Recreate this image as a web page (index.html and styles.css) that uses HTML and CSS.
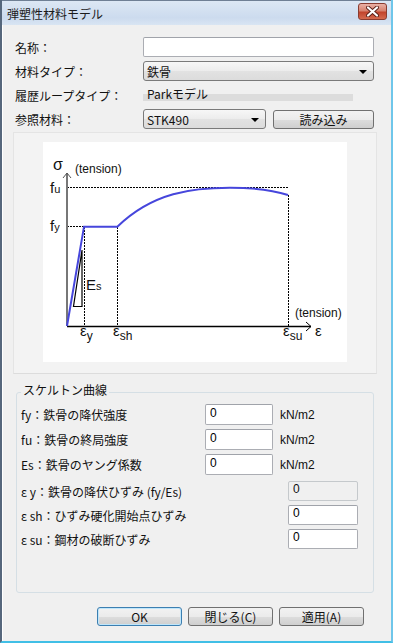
FILE: index.html
```html
<!DOCTYPE html>
<html lang="ja">
<head>
    <meta charset="UTF-8">
    <meta name="viewport" content="width=device-width, initial-scale=1.0">
    <title>弾塑性材料モデル</title>
    <link rel="stylesheet" href="styles.css">
</head>
<body>
<div class="window">
    <div class="titlebar">
        <span class="title">弾塑性材料モデル</span>
        <span class="close">
            <svg width="13" height="11" viewBox="0 0 13 11">
                <path d="M2 1.5 L11 9.5 M11 1.5 L2 9.5" stroke="#5a2018" stroke-width="4" stroke-linecap="round"/>
                <path d="M2 1.5 L11 9.5 M11 1.5 L2 9.5" stroke="#fff" stroke-width="2.2" stroke-linecap="round"/>
            </svg>
        </span>
    </div>

    <div class="body">
        <div class="form">
            <div class="row">
                <label>名称：</label>
                <input type="text" class="text wide">
            </div>
            <div class="row">
                <label>材料タイプ：</label>
                <div class="combo wide"><span>鉄骨</span><span class="arrow"></span></div>
            </div>
            <div class="row">
                <label>履歴ループタイプ：</label>
                <div class="static">Parkモデル</div>
            </div>
            <div class="row">
                <label>参照材料：</label>
                <div class="combo short"><span>STK490</span><span class="arrow"></span></div>
                <button class="btn load">読み込み</button>
            </div>
        </div>

        <div class="panel">
            <div class="chart">
                <svg width="304" height="220" viewBox="0 0 304 220">
                    <g stroke="#000" stroke-width="1" stroke-dasharray="2 1" fill="none">
                        <line x1="24" y1="45.5" x2="245" y2="45.5"/>
                        <line x1="24" y1="84.5" x2="41" y2="84.5"/>
                        <line x1="41.5" y1="85" x2="41.5" y2="184"/>
                        <line x1="74.5" y1="85" x2="74.5" y2="184"/>
                        <line x1="245.5" y1="53" x2="245.5" y2="184"/>
                    </g>
                    <line x1="24" y1="31" x2="24" y2="184" stroke="#777" stroke-width="2"/>
                    <path d="M20 36 L24 31 L28 36" stroke="#555" stroke-width="1" fill="none"/>
                    <line x1="24" y1="184.5" x2="268" y2="184.5" stroke="#000" stroke-width="1.5"/>
                    <path d="M263 180 L268 184.5 L263 189" stroke="#000" stroke-width="1" fill="none"/>
                    <path d="M24 184 L41 84.7 L74.3 84.7 C110 50 150 45.7 187 45.7 C210 45.7 230 48 245 53" stroke="#4646dc" stroke-width="2" fill="none"/>
                    <path d="M30.5 164.5 L39 164.5 L39 108 Z" stroke="#000" stroke-width="1.2" fill="none"/>
                    <g class="lbl">
                        <text x="10" y="28" font-size="16">σ</text>
                        <text x="32" y="31" font-size="12">(tension)</text>
                        <text x="7" y="51" font-size="15">f<tspan font-size="11">u</tspan></text>
                        <text x="7" y="89" font-size="15">f<tspan font-size="11">y</tspan></text>
                        <text x="43" y="148" font-size="15">E<tspan font-size="11">s</tspan></text>
                        <text x="252" y="175" font-size="12">(tension)</text>
                        <text x="272" y="194" font-size="15">ε</text>
                        <text x="37" y="194" font-size="15">ε<tspan font-size="12" dy="4">y</tspan></text>
                        <text x="70" y="194" font-size="15">ε<tspan font-size="12" dy="4">sh</tspan></text>
                        <text x="240" y="194" font-size="15">ε<tspan font-size="12" dy="4">su</tspan></text>
                    </g>
                </svg>
            </div>
        </div>

        <fieldset class="group">
            <legend>スケルトン曲線</legend>
            <div class="grow">
                <label>fy：鉄骨の降伏強度</label>
                <input type="text" class="text num" value="0">
                <span class="unit">kN/m2</span>
            </div>
            <div class="grow">
                <label>fu：鉄骨の終局強度</label>
                <input type="text" class="text num" value="0">
                <span class="unit">kN/m2</span>
            </div>
            <div class="grow">
                <label>Es：鉄骨のヤング係数</label>
                <input type="text" class="text num" value="0">
                <span class="unit">kN/m2</span>
            </div>
            <div class="grow strain first">
                <label>ε y：鉄骨の降伏ひずみ (fy/Es)</label>
                <input type="text" class="text num2" value="0" disabled>
            </div>
            <div class="grow strain">
                <label>ε sh：ひずみ硬化開始点ひずみ</label>
                <input type="text" class="text num2" value="0">
            </div>
            <div class="grow strain">
                <label>ε su：鋼材の破断ひずみ</label>
                <input type="text" class="text num2" value="0">
            </div>
        </fieldset>

        <div class="buttons">
            <button class="btn ok">OK</button>
            <button class="btn">閉じる(C)</button>
            <button class="btn">適用(A)</button>
        </div>
    </div>
</div>
</body>
</html>
```

FILE: styles.css
```css
body{
    margin: 0;
    font-family: "Noto Sans CJK JP", "Liberation Sans", sans-serif;
    font-size: 12px;
    color: #111;
}
.window{
    width: 393px;
    height: 643px;
    box-sizing: border-box;
    display: flex;
    flex-direction: column;
    border-left: 2px solid #56677c;
    border-right: 2px solid #6fc6ea;
    border-bottom: 2px solid #41bfe6;
    background-color: #f0f0f0;
}
.titlebar{
    height: 25px;
    flex-shrink: 0;
    display: flex;
    align-items: center;
    justify-content: space-between;
    padding: 0 4px 0 5px;
    background: linear-gradient(#dce7f4, #ccdbee 70%, #d9e5f3);
    border-top: 1px solid #6f7f94;
    box-sizing: border-box;
}
.title{
    font-size: 12px;
    color: #1b1b1b;
}
.close{
    width: 29px;
    height: 17px;
    box-sizing: border-box;
    border: 1px solid #8a3c30;
    border-radius: 3px;
    background: linear-gradient(#eab1a6, #d7826f 45%, #c2442c 55%, #d46a4f);
    display: flex;
    align-items: center;
    justify-content: center;
    margin-top: -4px;
}
.body{
    flex: 1;
    display: flex;
    flex-direction: column;
    box-shadow: inset 1px 0 #ffffff;
}

/* top form */
.form{
    padding: 12px 0 0 13px;
    display: flex;
    flex-direction: column;
    gap: 4px;
}
.row{
    display: flex;
    align-items: center;
    height: 20px;
}
.row label{
    width: 128px;
}
.text{
    box-sizing: border-box;
    height: 20px;
    border: 1px solid #abadb3;
    border-top-color: #a0a3aa;
    border-radius: 2px;
    background-color: #fff;
    font-family: "Liberation Sans", "Noto Sans CJK JP", sans-serif;
    font-size: 12px;
    padding: 0 4px 4px;
}
.wide{
    width: 231px;
}
.combo{
    box-sizing: border-box;
    height: 20px;
    border: 1px solid #7a7a7a;
    border-radius: 3px;
    background: linear-gradient(#f7f7f7, #ececec 50%, #e2e2e2 51%, #dcdcdc);
    display: flex;
    align-items: center;
    justify-content: space-between;
    padding: 0 6px 0 3px;
}
.short{
    width: 123px;
}
.arrow{
    width: 0;
    height: 0;
    border-left: 4px solid transparent;
    border-right: 4px solid transparent;
    border-top: 4px solid #000;
    margin-top: 2px;
}
.static{
    width: 210px;
    height: 20px;
    box-sizing: border-box;
    padding: 0 4px;
    line-height: 18px;
    background: linear-gradient(transparent 45%, #dcdcdc 45%, #dcdcdc 80%, transparent 80%);
}
.btn{
    box-sizing: border-box;
    height: 19px;
    border: 1px solid #707070;
    border-radius: 3px;
    background: linear-gradient(#f2f2f2, #ebebeb 50%, #dddddd 51%, #cfcfcf);
    font-family: "Noto Sans CJK JP", "Liberation Sans", sans-serif;
    font-size: 12px;
    color: #111;
    padding: 0;
    line-height: 15px;
}
.load{
    width: 101px;
    margin-left: 7px;
}

/* chart */
.panel{
    margin: 3px 0 0 11px;
    width: 364px;
    height: 242px;
    box-sizing: border-box;
    border: 1px solid #e4e4e4;
    border-bottom-color: #dcdcdc;
    background-color: #f3f3f3;
    padding: 9px 0 0 29px;
}
.chart{
    width: 304px;
    height: 220px;
    background-color: #fff;
}
.chart svg{
    display: block;
}
.lbl text{
    font-family: "Liberation Sans", sans-serif;
    fill: #111;
}

/* skeleton group */
.group{
    margin: 9px 0 0 14px;
    width: 358px;
    height: 210px;
    box-sizing: border-box;
    border: 1px solid #d5dfe5;
    border-radius: 3px;
    padding: 3px 0 0 4px;
    display: flex;
    flex-direction: column;
    gap: 4px;
}
.group legend{
    padding: 0 2px 4px;
    line-height: 14px;
}
.grow{
    display: flex;
    align-items: center;
    height: 21px;
}
.grow label{
    width: 184px;
}
.num{
    width: 68px;
    height: 21px;
}
.unit{
    margin-left: 7px;
    font-family: "Liberation Sans", sans-serif;
}
.strain{
    height: 20px;
}
.strain.first{
    margin-top: 2px;
}
.strain label{
    width: 267px;
}
.num2{
    width: 70px;
}
.num2:disabled{
    background-color: #f0f0f0;
    border-color: #c5c9cc;
    color: #111;
}

/* bottom buttons */
.buttons{
    display: flex;
    justify-content: flex-end;
    gap: 6px;
    padding: 14px 27px 0 0;
}
.buttons .btn{
    width: 85px;
}
.ok{
    border-color: #3c7fb1;
    box-shadow: inset 0 0 0 1px #bfe6fb;
}
```
